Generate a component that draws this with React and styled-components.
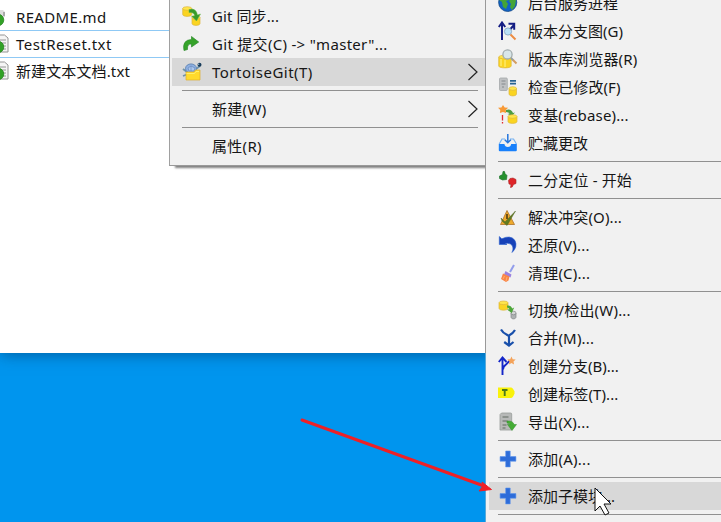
import React from "react";
import styled, { createGlobalStyle } from "styled-components";

const GlobalStyle = createGlobalStyle`
  * { box-sizing: border-box; }
  body { margin: 0; overflow: hidden; }
`;

const Desktop = styled.main`
  position: relative;
  width: 721px;
  height: 522px;
  overflow: hidden;
  background: #0095ee;
  color: #161616;
  font: 15px/28px "Noto Sans", "Noto Sans CJK SC", sans-serif;
`;

const Explorer = styled.section`
  height: 353px;
  padding-top: 4px;
  background: #fff;
  box-shadow: 0 1px 15px rgba(0, 35, 75, 0.5);
`;

const FileRow = styled.div`
  display: flex;
  align-items: center;
  width: 169px;
  height: 27px;
  border-bottom: 1px solid ${(p) => (p.$edge ? "#8fc9f5" : "transparent")};
`;

const FileIcon = styled.svg`
  flex: none;
  width: 9px;
  height: 22px;
  margin-right: 7px;
`;

const Label = styled.span`
  white-space: pre;
  letter-spacing: ${(p) => p.$spacing || 0}px;
`;

const Menu = styled.nav`
  position: absolute;
  background: #f1f1f1;
`;

const ContextMenu = styled(Menu)`
  left: 169px;
  top: 0;
  width: 317px;
  height: 166px;
  padding: 2px 0 0 2px;
  border-left: 1px solid #a0a0a0;
  border-bottom: 1px solid #999;
  box-shadow: 5px 3px 2px -1px rgba(0, 0, 0, 0.5);
`;

const SubMenu = styled(Menu)`
  left: 485px;
  top: -11px;
  width: 240px;
  height: 540px;
  padding-left: 3px;
  border-left: 1px solid;
  border-image: linear-gradient(#999 364px, #58a9d8 364px) 1;
`;

const MenuRow = styled.div`
  display: flex;
  align-items: center;
  height: 28px;
  padding-left: ${(p) => (p.$sub ? 9 : 10)}px;
  background: ${(p) => (p.$active ? "#d8d8d8" : "transparent")};
`;

const IconSlot = styled.span`
  flex: none;
  width: 30px;
  height: 20px;
`;

const Icon = styled.svg`
  display: block;
  width: 20px;
  height: 20px;
`;

const Chevron = styled.svg`
  width: 12px;
  height: 18px;
  margin: 0 7px 0 auto;
`;

const Separator = styled.hr`
  height: 1px;
  margin: 4px ${(p) => (p.$sub ? "0 4px 9px" : "8px 4px 10px")};
  border: 0;
  background: #909090;
`;

const Arrow = styled.svg`
  position: absolute;
  left: 296px;
  top: 412px;
  width: 200px;
  height: 88px;
`;

const Pointer = styled.svg`
  position: absolute;
  left: 593px;
  top: 486px;
  width: 20px;
  height: 34px;
`;

const Database = ({ x, y, w = 9, h = 10, gray }) => (
  <g fill={gray ? "#aeb2b3" : "#fad421"} stroke={gray ? "#818586" : "#dcb63c"} strokeWidth=".7">
    <path d={`M${x} ${y + 2}v${h - 4}c0 2.5 ${w} 2.5 ${w} 0v-${h - 4}`} />
    <ellipse cx={x + w / 2} cy={y + 2} rx={w / 2} ry="1.8" fill={gray ? "#d2d4d4" : "#ffe64b"} />
  </g>
);

const drawings = {
  sync: <><Database x={0.7} y={0.5} w={9} h={10} /><Database x={10} y={9.5} w={8} h={10} /><path d="M7 3.5q7-2 8.5 5.5l3-1-4 7-5-5 3 0q0-4-5.500-3.500z" fill="#379b29" stroke="#6ab74d" strokeWidth=".5" /></>,
  commit: <path d="M2 16.500Q-.2 6 9.500 5.500V2.500l7.200 5.500-7.200 5V10Q5 9.500 5.500 15.500z" fill="#35a329" stroke="#2d8b2c" strokeWidth=".7" />,
  tortoise: <>
    <path d="M1 7l4 3M1 14l5-2M14 7l4-3" stroke="#6f93a9" strokeWidth="1.8" />
    <ellipse cx="9" cy="6.5" rx="5.5" ry="4.6" fill="#8dafe1" stroke="#567cad" strokeWidth=".8" />
    <path d="M6 6l3-2 4 2-1 3H7zM9 4v5" fill="#aac6ec" stroke="#5f82b5" strokeWidth=".6" />
    <circle cx="17.500" cy="2.8" r="2" fill="#173b5a" /><circle cx="16.700" cy="2.2" r=".6" fill="#c9e2ed" />
    <path d="M4 18V10h8l1.500-2H18v10z" fill="#ffda2b" stroke="#dfb02c" strokeWidth=".7" />
    <path d="M4.500 11.500h8l1.500-2h3" stroke="#fff06a" />
  </>,
  globe: <><circle cx="9.7" cy="9.4" r="9.1" fill="#1263c5" stroke="#0b407e" strokeWidth=".7" /><path d="M2 5l5-3 5 2-1 3-3 1 2 3-2 5-3-2-1-5-3-2zM14 5l4 2-1 6-3 4-2-3 1-3-2-3z" fill="#45a437" /><path d="M3 6q5-6 11-3" stroke="#a8d4f1" opacity=".6" /></>,
  graph: <><path d="M4 19V3M.8 6L4 1.500 7.200 6M9 12l7-8M10.500 2.800h5.700v6" stroke="#141d83" strokeWidth="2" /><circle cx="10" cy="10.500" r="3.6" fill="#b9dff6" stroke="#7f9fc0" strokeWidth=".8" /><path d="M12.500 13.500l5 5" stroke="#ed8c42" strokeWidth="2" /></>,
  browser: <><Database x={0.7} y={6} w={12.500} h={13} /><path d="M3 10v7M7 11v7" stroke="#fff38b" /><circle cx="9.500" cy="5.4" r="4.6" fill="#d9e6e9" stroke="#a0abad" strokeWidth="1.300" /><path d="M13 9l2.500 2.500" stroke="#959fa1" strokeWidth="2" /><path d="M15 11l3.500 3.500" stroke="#d49d61" strokeWidth="2" /></>,
  modified: <><rect x="1.500" y="1" width="7.800" height="12.500" rx="1" fill="#bfc1c3" stroke="#a5a8aa" strokeWidth=".8" /><path d="M3.500 4h4M3.500 7h4M4 10h2" stroke="#84898d" /><path d="M12 3.800h6M12 6.700h6" stroke="#286392" strokeWidth="1.700" /><Database x={11} y={9.5} w={7.5} h={9.500} /></>,
  rebase: <><path d="M5 0l1.700 2.400 3.400.4L7.800 5l.3 3L5 7 1.900 8l.4-3L0 2.800 3.400 2.400z" fill="#f89a36" /><path d="M8 5q5-2 7 3l2-.5-3 3.500-4.500-2 2-.4Q11 7 8 7z" fill="#4e9d42" /><path d="M4.500 10v5.500M4.500 17v1.500" stroke="#e22b2f" strokeWidth="1.300" /><Database x={10} y={9.500} w={9} h={9} /></>,
  stash: <><path d="M1.200 11L4 6h3M12 6h3.500l3 5" stroke="#75b2f2" strokeWidth="1.200" /><path d="M.8 11h5.600q.5 3 3.400 3t3.400-3h5.600v6.200q0 1-1 1h-16q-1 0-1-1z" fill="#1880fb" /><path d="M9.800 1v8.500M6.800 6.700l3 3 3-3" stroke="#2475dc" strokeWidth="1.500" /></>,
  bisect: <><path d="M1.500 6l3-1.500.5-3q2-1 2 2L9 5.500l-.5 4-4 .5-3-1.500z" fill="#25902e" stroke="#176e27" strokeWidth=".6" /><path d="M18 9.500l-3-1.500-3 .5-1.500 2 .5 3.500 2 .5-.5 3q2 .3 3-3l2.500-1z" fill="#df2528" stroke="#a92324" strokeWidth=".6" /></>,
  resolve: <><path d="M9 3.500L16.500 17.500H2.500z" fill="#eeaa2c" stroke="#ad722a" strokeWidth=".8" /><path d="M9 7v5" stroke="#705115" strokeWidth="2" /><path d="M3 11l4 4L17.500 4 9 18.500 4 14z" fill="#617b20" stroke="#526624" strokeWidth=".5" /></>,
  revert: <path d="M1.300 9.500V1.500l2.500 2.300Q12.500-.5 17 5.500q3 6.500-3 12 2.500-6-1.500-8.500-3-1.500-5.500 0L9 9.500z" fill="#1742b8" stroke="#2c61d0" strokeWidth=".6" />,
  clean: <><path d="M12 9l4-7" stroke="#929deb" strokeWidth="2" /><path d="M7.500 8l6 3.500-1 3-6.500-3z" fill="#9c82df" /><path d="M5 10.500l6.500 3-1 4-2.500 1.500-5-3z" fill="#fa8548" /><path d="M6.500 13l-1.500 3M9 14l-1 4" stroke="#ffbd75" strokeWidth=".8" /></>,
  switch: <><Database x={1} y={0.8} w={9} h={9.500} /><Database x={13} y={11} w={5} h={8} gray /><path d="M9 5.500q4-.5 5.200 3l2-1-2.500 5.500L9 9.500l2.500-.3Q10.500 7.500 9 7.500z" fill="#4da639" /></>,
  merge: <path d="M3 1.500Q5 5 8.500 6.500L11 8v10M17 2q-2 3.500-6 5.500M6.200 14l4.800 3.500 4.500-3.500" stroke="#1950ab" strokeWidth="2.200" />,
  branch: <><path d="M4.500 19V2M.8 6L4.500 1.500l4 4.500M5 13.500q0-3 3-5l4-4" stroke="#1426c8" strokeWidth="1.900" /><path d="M13.500.5l1.200 2.700 3 .3-2.200 2 .6 3-2.600-1.500L11 8.500l.4-3-2-2 2.800-.3z" fill="#f4a35a" /></>,
  tag: <><path d="M0 3.500h13q1.700 0 3.500 4v2q-1.700 4.500-3.500 4.500H0z" fill="#f9f20b" /><path d="M4 6h5.500M6.700 6v6" stroke="#4b781c" strokeWidth="1.900" /></>,
  export: <><path d="M2 2.500l1.500-1.500h9q1.200 0 1.200 1v16H2z" fill="#b7b9b8" stroke="#989d99" strokeWidth=".8" /><path d="M4.500 5h6M4.500 9h5M4.500 13h4M4.500 16h3" stroke="#7d847e" strokeWidth="1.400" /><path d="M9 9q6-.5 7 3.500h2.500L14 18.500l-4.500-6h2.500Q11.500 11 9 11z" fill="#45ad35" stroke="#338f2c" strokeWidth=".5" /></>,
  add: <path d="M7.700 2h4.500v5.600h5.700v4.600h-5.700v5.700H7.700v-5.700H2.100V7.600h5.600z" fill="#2d6cd9" stroke="#5a93ec" strokeWidth=".6" />,
};

const submenuGroups = [
  [["后台服务进程", "globe"], ["版本分支图(G)", "graph"], ["版本库浏览器(R)", "browser", 0.1], ["检查已修改(F)", "modified", 0.1], ["变基(rebase)...", "rebase", 0.15], ["贮藏更改", "stash"]],
  [["二分定位 - 开始", "bisect", 0.15]],
  [["解决冲突(O)...", "resolve", 0.12], ["还原(V)...", "revert", 0.2], ["清理(C)...", "clean", 0.2]],
  [["切换/检出(W)...", "switch", 0.2], ["合并(M)...", "merge", 0.2], ["创建分支(B)...", "branch"], ["创建标签(T)...", "tag", 0.1], ["导出(X)...", "export", 0.25]],
  [["添加(A)...", "add", 0.25]],
  [["添加子模块...", "add", 0, true]],
];

function MenuItem({ label, icon, active, arrow, sub, spacing }) {
  return (
    <MenuRow $active={active} $sub={sub}>
      <IconSlot>{icon && <Icon viewBox="0 0 20 20" fill="none">{drawings[icon]}</Icon>}</IconSlot>
      <Label $spacing={spacing}>{label}</Label>
      {arrow && <Chevron viewBox="0 0 12 18"><path d="M1.500 1l8.500 8-8.500 8" fill="none" stroke="#222" strokeWidth="1.200" /></Chevron>}
    </MenuRow>
  );
}

function File({ name, edge, markdown, spacing }) {
  return (
    <FileRow $edge={edge}>
      <FileIcon viewBox="0 0 9 22">
        {markdown ? <path d="M0 4h3l2 2v5H0z" fill="#ddd" /> : <path d="M0 2h4.500L8 5v14H0M0 7h6M0 10h6M0 13h6M0 16h6" fill="#f5f5f5" stroke="#949494" />}
        {markdown && <path d="M4 6v4" stroke="#777" />}
        <circle cx="-2" cy="14" r="5.800" fill="#32a127" stroke="#218119" strokeWidth=".7" />
      </FileIcon>
      <Label $spacing={spacing}>{name}</Label>
    </FileRow>
  );
}

export default function App() {
  return (
    <Desktop>
      <GlobalStyle />
      <Explorer>
        <File name="README.md" edge markdown spacing={0.35} />
        <File name="TestReset.txt" edge spacing={0.45} />
        <File name="新建文本文档.txt" spacing={0.12} />
      </Explorer>
      <ContextMenu>
        <MenuItem label="Git 同步..." icon="sync" spacing={0.1} />
        <MenuItem label={'Git 提交(C) -> "master"...'} icon="commit" spacing={0.3} />
        <MenuItem label="TortoiseGit(T)" icon="tortoise" active arrow spacing={0.48} />
        <Separator />
        <MenuItem label="新建(W)" arrow spacing={0.3} />
        <Separator />
        <MenuItem label="属性(R)" spacing={0.3} />
      </ContextMenu>
      <SubMenu>
        {submenuGroups.map((group, index) => (
          <React.Fragment key={index}>
            {group.map(([label, icon, spacing, active]) => <MenuItem key={label} label={label} icon={icon} spacing={spacing} active={active} sub />)}
            <Separator $sub />
          </React.Fragment>
        ))}
      </SubMenu>
      <Arrow viewBox="0 0 200 88">
        <path d="M6 8L188 74" stroke="#ee2026" strokeWidth="3" strokeLinecap="round" />
        <path d="M195.500 77.500l-9.500-7.500 1 4-4 5z" fill="#ee2026" stroke="#ee2026" />
      </Arrow>
      <Pointer viewBox="0 0 20 34">
        <path d="M2 2v23l5-5 5 9 4-2-5-9h7z" fill="#fff" stroke="#111" />
      </Pointer>
    </Desktop>
  );
}
